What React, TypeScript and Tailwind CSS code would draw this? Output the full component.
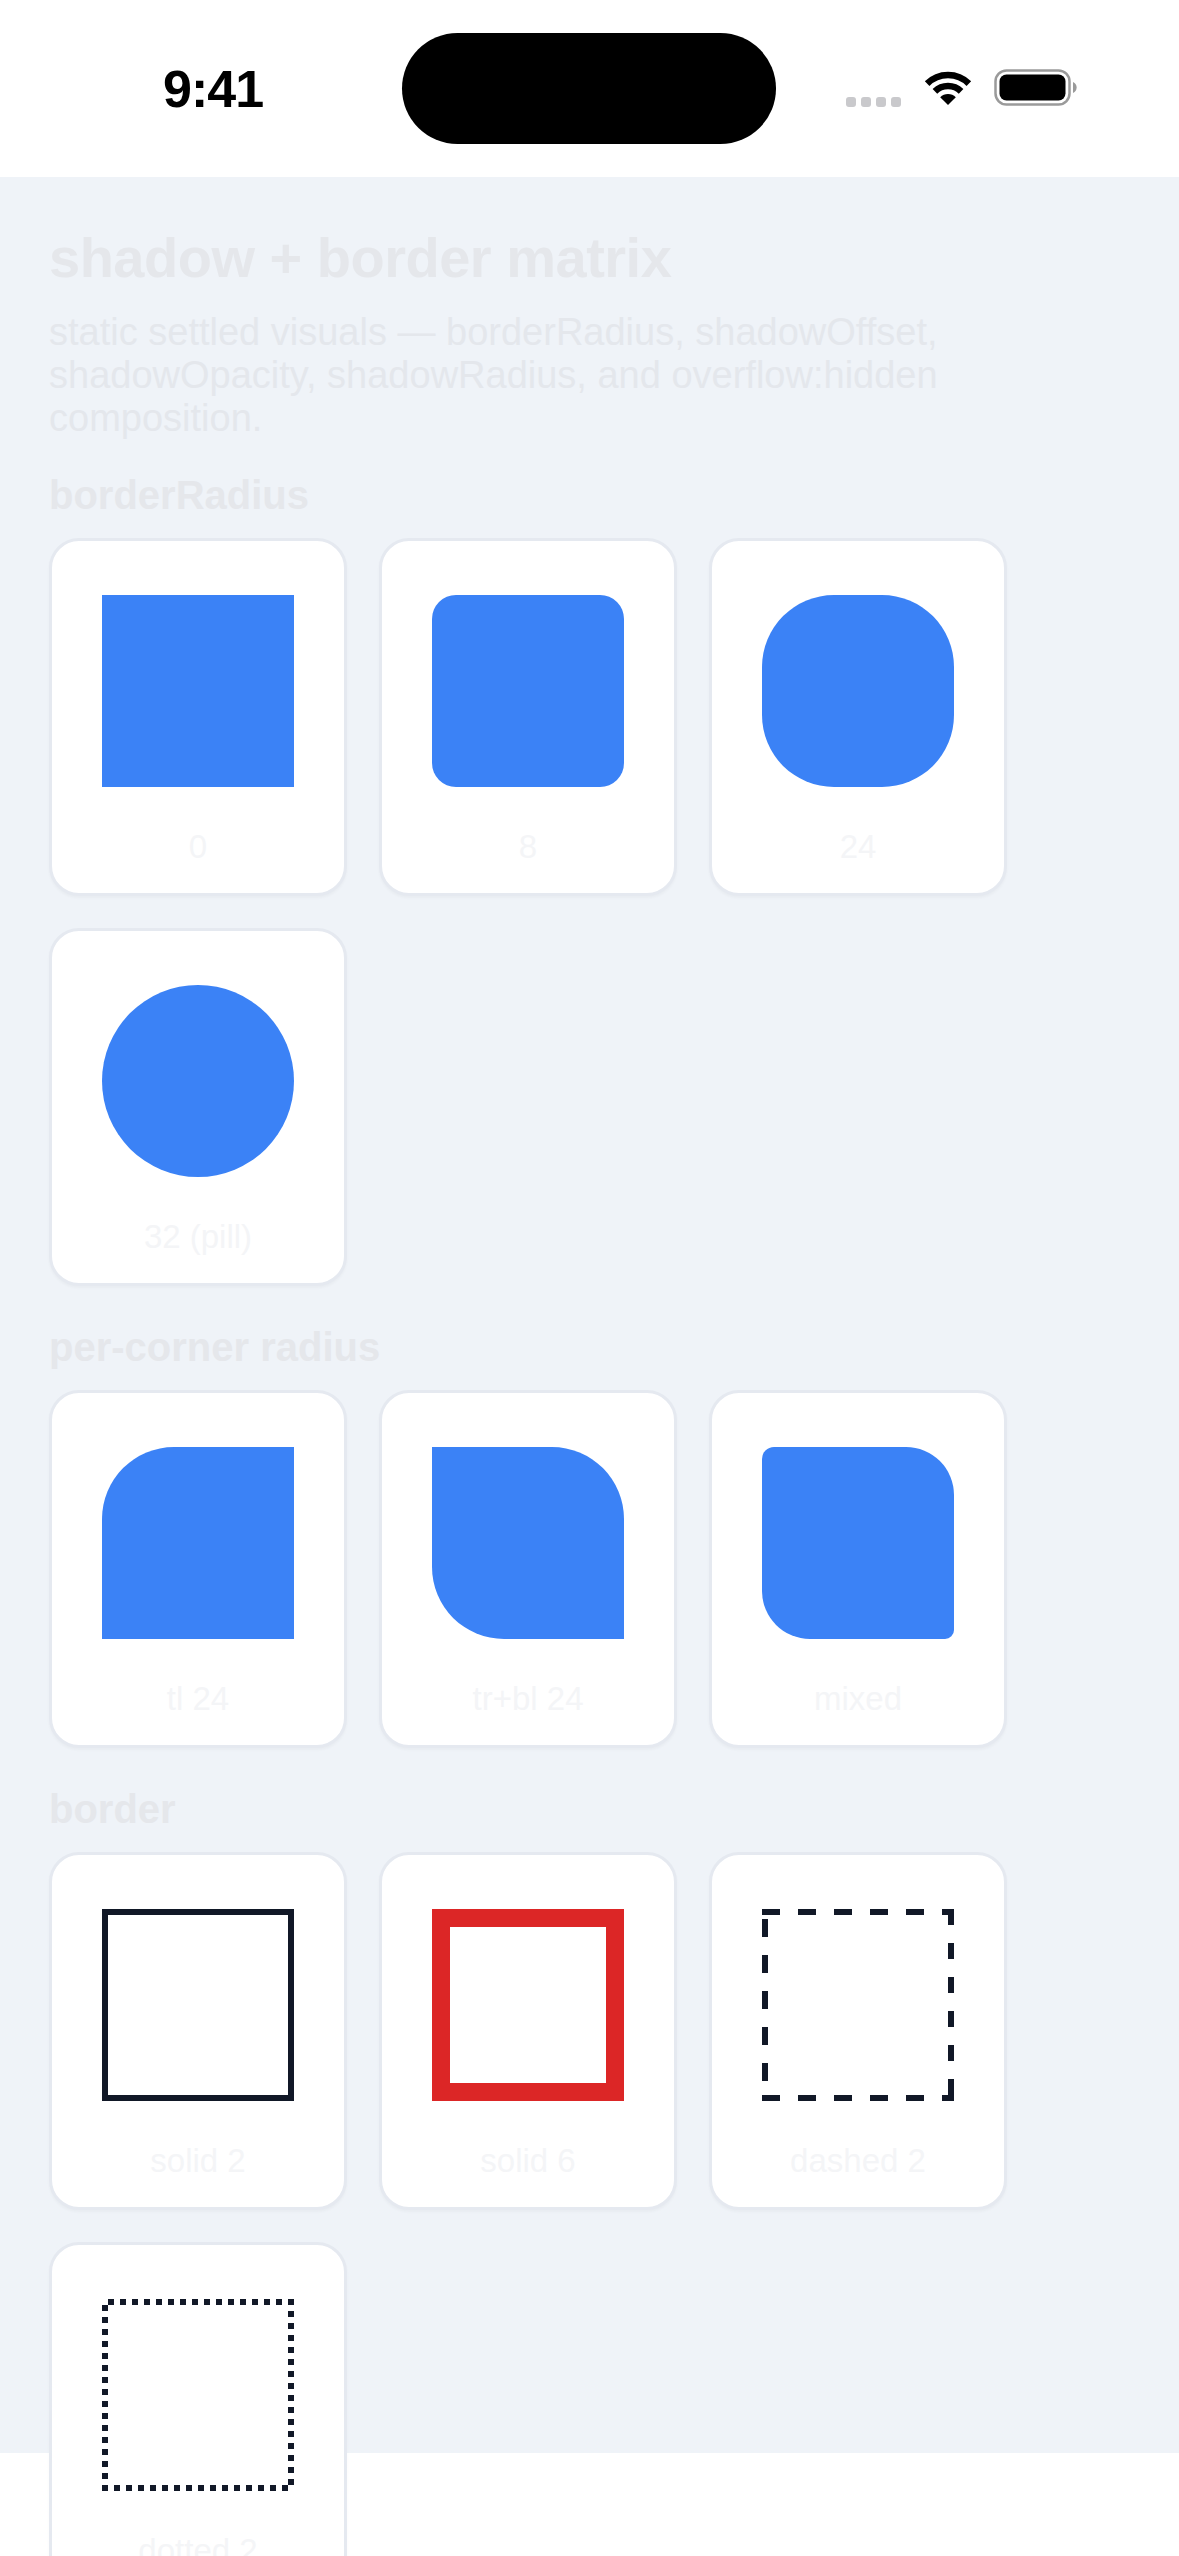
import React from "react";

type Item = { label: string; kind: "fill" | "solid2" | "solid6" | "dashed" | "dotted"; cls?: string };

const sections: { title: string; items: Item[] }[] = [
  {
    title: "borderRadius",
    items: [
      { label: "0", kind: "fill", cls: "rounded-none" },
      { label: "8", kind: "fill", cls: "rounded-[24px]" },
      { label: "24", kind: "fill", cls: "rounded-[72px]" },
      { label: "32 (pill)", kind: "fill", cls: "rounded-[96px]" },
    ],
  },
  {
    title: "per-corner radius",
    items: [
      { label: "tl 24", kind: "fill", cls: "rounded-tl-[72px]" },
      { label: "tr+bl 24", kind: "fill", cls: "rounded-tr-[72px] rounded-bl-[72px]" },
      { label: "mixed", kind: "fill", cls: "rounded-tl-[12px] rounded-tr-[48px] rounded-bl-[48px] rounded-br-[9px]" },
    ],
  },
  {
    title: "border",
    items: [
      { label: "solid 2", kind: "solid2" },
      { label: "solid 6", kind: "solid6" },
      { label: "dashed 2", kind: "dashed" },
      { label: "dotted 2", kind: "dotted" },
    ],
  },
];

function Shape({ item }: { item: Item }) {
  if (item.kind === "fill") {
    return <div className={`w-[192px] h-[192px] bg-[#3b82f6] ${item.cls}`} />;
  }
  if (item.kind === "solid2") {
    return <div className="w-[192px] h-[192px] box-border border-[6px] border-solid border-[#111827]" />;
  }
  if (item.kind === "solid6") {
    return <div className="w-[192px] h-[192px] box-border border-[18px] border-solid border-[#dc2626]" />;
  }
  if (item.kind === "dashed") {
    return (
      <svg width="192" height="192" viewBox="0 0 192 192" className="block">
        <g stroke="#111827" strokeWidth="6" fill="none">
          <line x1="0" y1="3" x2="192" y2="3" strokeDasharray="18 18" />
          <line x1="0" y1="189" x2="192" y2="189" strokeDasharray="18 18" />
          <line x1="3" y1="10" x2="3" y2="192" strokeDasharray="18 18" />
          <line x1="189" y1="0" x2="189" y2="192" strokeDasharray="16 18" />
        </g>
      </svg>
    );
  }
  return (
    <svg width="192" height="192" viewBox="0 0 192 192" className="block">
      <rect x="3" y="3" width="186" height="186" fill="none" stroke="#111827" strokeWidth="6" strokeDasharray="6 6" strokeDashoffset="-3" />
    </svg>
  );
}

function Card({ item }: { item: Item }) {
  return (
    <div className="w-[298px] h-[358px] shrink-0 box-border bg-white border-[3px] border-[#e5e9f0] rounded-[30px] shadow-[0_2px_3px_rgba(15,23,42,0.03)] flex flex-col items-center pt-[54px]">
      <Shape item={item} />
      <div className="mt-[40px] text-[33px] leading-[40px] text-[#f4f5f7]">{item.label}</div>
    </div>
  );
}

function Wifi() {
  return (
    <svg width="50" height="37" viewBox="0 0 50 37" className="block">
      <path d="M25 36 L17.2 28.2 A11 11 0 0 1 32.8 28.2 Z" fill="#000" />
      <path d="M11.92 22.42 A18.5 18.5 0 0 1 38.08 22.42" fill="none" stroke="#000" strokeWidth="6.5" />
      <path d="M4.14 14.64 A29.5 29.5 0 0 1 45.86 14.64" fill="none" stroke="#000" strokeWidth="6.5" />
    </svg>
  );
}

function Battery() {
  return (
    <svg width="84" height="37" viewBox="0 0 84 37" className="block">
      <rect x="1.5" y="1.5" width="74" height="34" rx="11" fill="none" stroke="#9a9a9a" strokeWidth="2.5" />
      <rect x="5.5" y="5.5" width="66" height="26" rx="7" fill="#000" />
      <path d="M79 13 A6 6 0 0 1 79 24 Z" fill="#9a9a9a" />
    </svg>
  );
}

export default function App() {
  return (
    <div className="w-[1179px] min-h-[2556px] bg-white" style={{ fontFamily: '"Liberation Sans", Arial, sans-serif' }}>
      {/* status bar */}
      <div className="h-[177px] flex items-start pt-[33px] bg-white">
        <div className="w-[402px] h-[111px] flex items-center pl-[163px]">
          <span className="text-[52px] leading-[52px] font-bold text-black tracking-[-1px]">9:41</span>
        </div>
        <div className="w-[374px] h-[111px] rounded-full bg-black" />
        <div className="flex-1 h-[111px] flex items-center pl-[70px]">
          <div className="flex gap-[5px] mt-[27px]">
            <div className="w-[10px] h-[10px] rounded-[3px] bg-[#c9c9cc]" />
            <div className="w-[10px] h-[10px] rounded-[3px] bg-[#c9c9cc]" />
            <div className="w-[10px] h-[10px] rounded-[3px] bg-[#c9c9cc]" />
            <div className="w-[10px] h-[10px] rounded-[3px] bg-[#c9c9cc]" />
          </div>
          <div className="ml-[22px] -mt-[3px]">
            <Wifi />
          </div>
          <div className="ml-[21px] -mt-[3px]">
            <Battery />
          </div>
        </div>
      </div>

      {/* content */}
      <div className="h-[2276px] bg-[#eff3f8] px-[49px] pt-[47px]">
        <h1 className="text-[56px] leading-[68px] font-bold text-[#e5e7eb] tracking-[-0.5px]">shadow + border matrix</h1>
        <p className="mt-[19px] text-[38px] leading-[43px] text-[#e4e7ec]">
          static settled visuals — borderRadius, shadowOffset, shadowOpacity, shadowRadius, and overflow:hidden composition.
        </p>
        {sections.map((s, i) => (
          <section key={s.title} className={i === 0 ? "mt-[31px]" : "mt-[37px]"}>
            <h2 className="text-[40px] leading-[48px] font-bold text-[#e5e7eb] mb-[19px]">{s.title}</h2>
            <div className="flex flex-wrap gap-[32px]">
              {s.items.map((it) => (
                <Card key={it.label} item={it} />
              ))}
            </div>
          </section>
        ))}
      </div>
    </div>
  );
}
